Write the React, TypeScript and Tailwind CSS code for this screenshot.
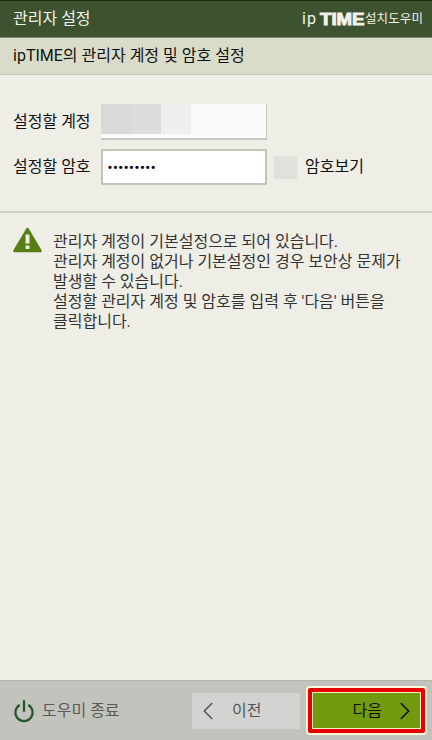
import React from "react";
import { ChevronLeft, ChevronRight } from "lucide-react";

const messages = [
  "관리자 계정이 기본설정으로 되어 있습니다.",
  "관리자 계정이 없거나 기본설정인 경우 보안상 문제가",
  "발생할 수 있습니다.",
  "설정할 관리자 계정 및 암호를 입력 후 '다음' 버튼을",
  "클릭합니다.",
];

const fontStack = { fontFamily: 'Roboto, "Noto Sans CJK KR", sans-serif' };

export default function App() {
  return (
    <div className="w-[432px] h-[740px] flex flex-col bg-[#eeeee6] overflow-hidden" style={fontStack}>
      <header className="h-[37px] shrink-0 flex items-center justify-between pl-[13px] pr-[6px] bg-[#3d5330] border-t border-t-[#1c2a15] text-[#f2f2ea]">
        <span className="text-[16px] leading-none">관리자 설정</span>
        <span className="flex items-center leading-none">
          <span className="text-[16px] w-[18px] tracking-[1px]">ip</span>
          <span className="text-[16.5px] font-black origin-left scale-x-[1.13] w-[45px] font-['Liberation_Sans'] [-webkit-text-stroke:1px_#f2f2ea]">TIME</span>
          <span className="text-[12.5px] w-[61px] tracking-[0.1px]">설치도우미</span>
        </span>
      </header>

      <div className="h-[38px] shrink-0 flex items-center pl-[13px] bg-[#d8dcc8] border-t border-t-[#7f8a70] border-b border-b-[#c2c4ba] text-[16px] text-[#111111]">
        ipTIME의 관리자 계정 및 암호 설정
      </div>

      <section className="h-[138px] shrink-0 pl-[13px] pt-[29px] border-b-2 border-b-[#cfcfc8] text-[16px] text-[#111111]">
        <div className="flex items-center h-[36px]">
          <span className="w-[88px] leading-none">설정할 계정</span>
          <div className="w-[166px] h-[36px] flex bg-[#fafafa] border-r border-b-2 border-[#c8c8c2] items-start">
            <div className="w-[30px] h-[30px] bg-[#d9d9d9]" />
            <div className="w-[30px] h-[30px] bg-[#dddddd]" />
            <div className="w-[30px] h-[30px] bg-[#efefef]" />
          </div>
        </div>
        <div className="flex items-center h-[36px] mt-[9px]">
          <span className="w-[88px] leading-none">설정할 암호</span>
          <div className="w-[166px] h-[36px] flex items-center pl-[5px] bg-white border-2 border-[#c4c4bc] text-black">
            <span className="leading-none font-['Liberation_Sans'] text-[11px] font-bold tracking-[1.55px]">•••••••••</span>
          </div>
          <div className="w-[23px] h-[23px] ml-[7px] bg-[#e0e0dc]" />
          <span className="ml-[8px] leading-none">암호보기</span>
        </div>
      </section>

      <section className="flex-1 flex items-start pl-[13px] pr-[14px] pt-[14px]">
        <svg width="29" height="26" viewBox="0 0 29 26" className="shrink-0">
          <path d="M14.5 2 L27.5 24 H1.5 Z" fill="#557f15" stroke="#557f15" strokeWidth="2.5" strokeLinejoin="round" />
          <rect x="12.5" y="7.5" width="4" height="9" fill="#eeeee6" />
          <rect x="12.5" y="18.5" width="4" height="3.5" fill="#eeeee6" />
        </svg>
        <div className="ml-[11px] mt-[5px] text-[16px] leading-[20px] text-[#333333] whitespace-nowrap">
          {messages.map((line) => (
            <p key={line}>{line}</p>
          ))}
        </div>
      </section>

      <footer className="h-[60px] shrink-0 flex items-center bg-[#c2c3bc] border-t border-t-[#b4b5ae]">
        <svg width="22" height="24" viewBox="0 0 22 24" fill="none" stroke="#24562a" strokeWidth="2.2" strokeLinecap="round" className="ml-[13px] mt-[1px]">
          <path d="M11 2 V12" />
          <path d="M6 6.5 A8.6 8.6 0 1 0 16 6.5" />
        </svg>
        <span className="ml-[7px] w-[77px] text-[16px] whitespace-nowrap leading-none text-[#5a5a56]">도우미 종료</span>
        <div className="ml-[73px] w-[108px] h-[36px] flex items-center bg-[#d3d3d1] text-[#555555] text-[16px]">
          <ChevronLeft size={30} strokeWidth={1.3} className="ml-[1px]" />
          <span className="ml-[9px] leading-none">이전</span>
        </div>
        <div className="ml-[6px] w-[121px] h-[49px] p-[2px] bg-[#fbf6da] rounded-[4px] shrink-0">
          <div className="w-full h-full border-[4px] border-[#e60000] rounded-[2px]">
            <div className="w-full h-full p-[1px] bg-[#f4f0c8]">
              <div className="w-full h-full flex items-center justify-end bg-[#719a0e] text-[16px] text-[#101010]">
                <span className="leading-none mr-[8px]">다음</span>
                <ChevronRight size={30} strokeWidth={1.3} />
              </div>
            </div>
          </div>
        </div>
      </footer>
    </div>
  );
}
